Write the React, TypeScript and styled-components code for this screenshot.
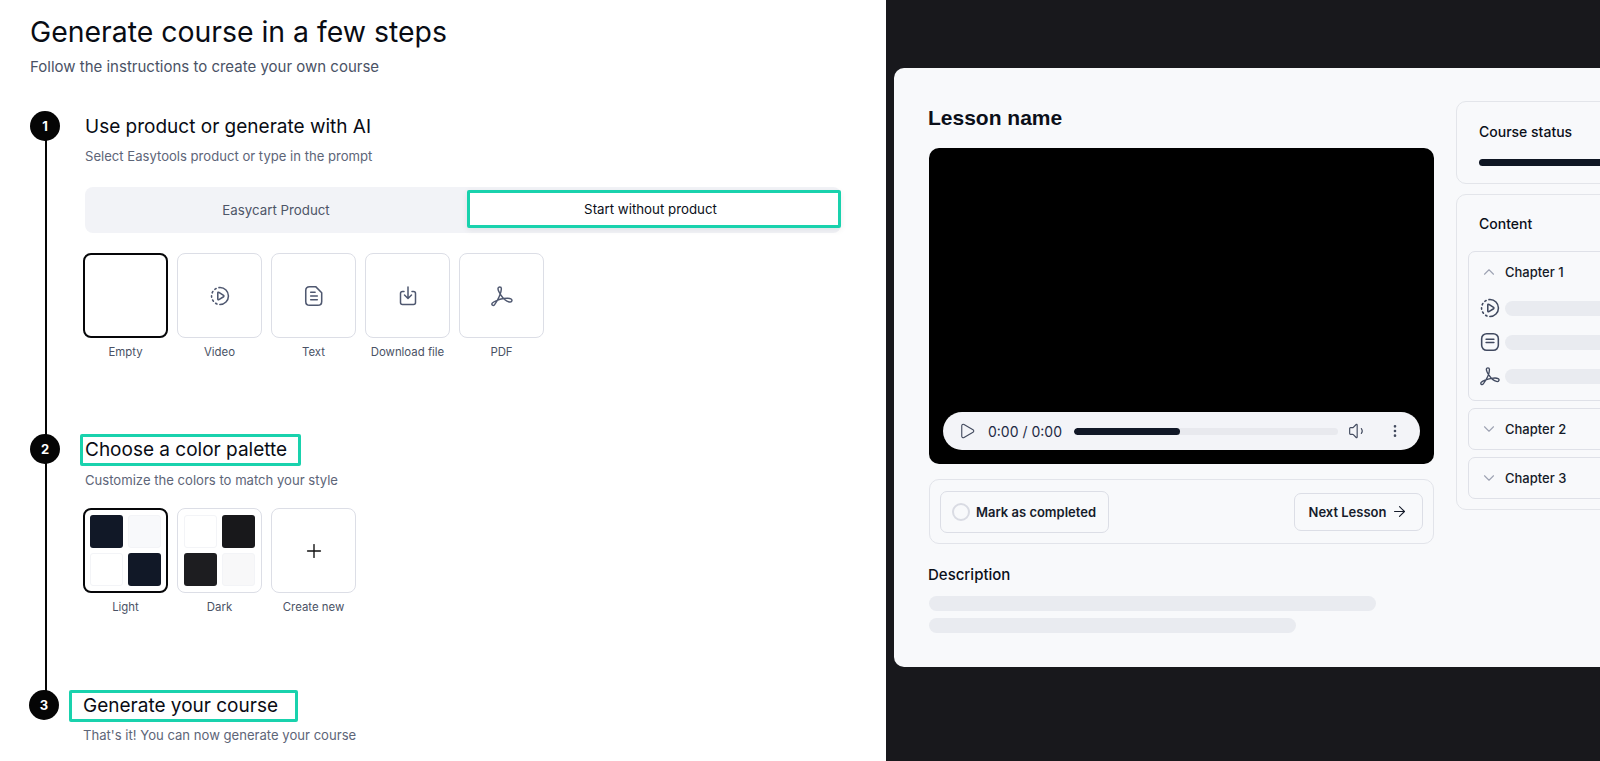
import React from "react";
import styled, { createGlobalStyle } from "styled-components";
import { Plus, Play, Volume1, EllipsisVertical, ArrowRight, ChevronUp, ChevronDown } from "lucide-react";

const Global = createGlobalStyle`
  html, body { margin: 0; padding: 0; width: 100%; height: 761px; overflow: hidden; background: #fff; }
  * { box-sizing: border-box; }
  body { font-family: Inter, "Noto Sans", sans-serif; color: #0b0f19; }
`;

const Page = styled.div`
  display: grid;
  grid-template-columns: 886px 714px;
  height: 761px;
  overflow: hidden;
`;

const Left = styled.section`
  padding: 14px 0 0 30px;
  background: #fff;
  min-width: 0;
`;

const Title = styled.h1`
  margin: 0;
  font-size: 28.4px;
  line-height: 36px;
  font-weight: 400;
  color: #090c14;
`;

const Subtitle = styled.p`
  margin: 7px 0 0;
  font-size: 15px;
  line-height: 20px;
  color: #4a5265;
`;

const Step = styled.div<{ $height: number; $top?: number; $line?: boolean; $shift?: number }>`
  position: relative;
  display: grid;
  grid-template-columns: 30px 1fr;
  column-gap: 24px;
  height: ${(p) => p.$height}px;
  margin-top: ${(p) => p.$top ?? 0}px;
  margin-left: ${(p) => p.$shift ?? 0}px;
  ${(p) =>
    p.$line &&
    `&::before { content: ""; position: absolute; left: 15px; top: 12px; bottom: -12px; width: 2px; background: #050505; }`}
`;

const Badge = styled.div`
  position: relative;
  z-index: 1;
  width: 30px;
  height: 30px;
  border-radius: 50%;
  background: #050505;
  color: #fff;
  font-size: 13px;
  font-weight: 700;
  display: flex;
  align-items: center;
  justify-content: center;
`;

const StepBody = styled.div<{ $left?: number; $top?: number }>`
  min-width: 0;
  padding-left: ${(p) => p.$left ?? 0}px;
  padding-top: ${(p) => p.$top ?? 0}px;
`;

const StepTitle = styled.h2`
  margin: 0;
  font-size: 19px;
  line-height: 30px;
  font-weight: 400;
  color: #090c14;
`;

const MarkedTitle = styled(StepTitle)<{ $pl: number; $pr: number; $mb: number }>`
  display: block;
  width: fit-content;
  border: 3px solid #19d2ad;
  border-radius: 2px;
  line-height: 26px;
  padding: 0 ${(p) => p.$pr}px 0 ${(p) => p.$pl}px;
  margin-left: ${(p) => -p.$pl - 3}px;
  margin-bottom: ${(p) => p.$mb}px;
`;

const StepHint = styled.p`
  margin: 5px 0 0;
  font-size: 13.1px;
  line-height: 18px;
  color: #5d6578;
`;

const Tabs = styled.div`
  margin-top: 22px;
  width: 756px;
  height: 46px;
  border-radius: 8px;
  background: #f2f3f7;
  display: grid;
  grid-template-columns: 382px 374px;
  align-items: start;
`;

const Tab = styled.div`
  text-align: center;
  font-size: 13.3px;
  line-height: 46px;
  color: #4e5567;
`;

const ActiveTab = styled.div`
  margin-top: 3px;
  height: 38px;
  background: #fff;
  border: 3px solid #19d2ad;
  border-radius: 2px;
  display: flex;
  align-items: center;
  justify-content: center;
  padding-right: 7px;
  font-size: 13.3px;
  color: #0b0f19;
  box-shadow: 0 2px 6px rgba(16, 24, 40, 0.08);
`;

const TileRow = styled.div<{ $top: number }>`
  display: flex;
  gap: 9px;
  margin-top: ${(p) => p.$top}px;
  margin-left: -2px;
`;

const TileItem = styled.div`
  width: 85px;
  display: flex;
  flex-direction: column;
  align-items: center;
  gap: 7px;
`;

const Tile = styled.div<{ $selected?: boolean }>`
  width: 85px;
  height: 85px;
  border-radius: 8px;
  border: ${(p) => (p.$selected ? "2px solid #060709" : "1px solid #dcdee6")};
  background: #fff;
  color: #4f5870;
  display: flex;
  align-items: center;
  justify-content: center;
`;

const TileLabel = styled.div`
  font-size: 11.4px;
  line-height: 14px;
  color: #4a5265;
  white-space: nowrap;
`;

const Swatches = styled.div`
  display: grid;
  grid-template-columns: 33px 33px;
  grid-auto-rows: 33px;
  gap: 5px;
`;

const Swatch = styled.div<{ $c: string; $light?: boolean }>`
  border-radius: 3px;
  background: ${(p) => p.$c};
  ${(p) => p.$light && "border: 1px solid #f3f4f7;"}
`;

const Right = styled.section`
  background: #18181c;
  padding: 68px 0 0 8px;
  overflow: hidden;
  min-width: 0;
`;

const Card = styled.div`
  width: 860px;
  height: 599px;
  background: #f8f9fb;
  border-radius: 10px;
  padding: 37px 0 0 35px;
  display: grid;
  grid-template-columns: 505px 1fr;
  column-gap: 22px;
`;

const Main = styled.div`
  min-width: 0;
`;

const LessonName = styled.h3`
  margin: 0 0 0 -1px;
  font-family: "Liberation Sans", Arial, sans-serif;
  font-size: 21px;
  line-height: 26px;
  font-weight: 700;
  color: #0b0f19;
`;

const Video = styled.div`
  margin-top: 17px;
  height: 316px;
  border-radius: 10px;
  background: #000;
  display: flex;
  align-items: flex-end;
  padding: 0 14px 14px 14px;
`;

const Controls = styled.div`
  width: 100%;
  height: 38px;
  border-radius: 19px;
  background: #f3f4f8;
  display: flex;
  align-items: center;
  padding: 0 17px 0 15px;
  color: #434b5f;
`;

const TimeText = styled.span`
  margin-left: 12px;
  font-size: 14px;
  color: #1e2a44;
  white-space: nowrap;
`;

const Track = styled.div`
  margin: 0 10px 0 12px;
  flex: 1;
  height: 7px;
  border-radius: 4px;
  background: #e8e9ee;
  overflow: hidden;
`;

const TrackFill = styled.div`
  height: 100%;
  border-radius: 4px;
  background: #111827;
`;

const ControlIcon = styled.span<{ $gap?: number }>`
  display: inline-flex;
  margin-left: ${(p) => p.$gap ?? 0}px;
`;

const ActionBox = styled.div`
  margin-top: 15px;
  height: 65px;
  border: 1px solid #e2e4ea;
  border-radius: 10px;
  display: flex;
  align-items: center;
  justify-content: space-between;
  padding: 0 10px 0 10px;
`;

const MarkButton = styled.div`
  width: 169px;
  height: 42px;
  border: 1px solid #dcdee6;
  border-radius: 7px;
  display: flex;
  align-items: center;
  gap: 6px;
  padding-left: 11px;
  font-size: 13px;
  font-weight: 600;
  color: #161c2b;
`;

const Radio = styled.span`
  width: 18px;
  height: 18px;
  border-radius: 50%;
  border: 2px solid #d9dbe3;
`;

const NextButton = styled.div`
  width: 129px;
  height: 38px;
  border: 1px solid #dcdee6;
  border-radius: 7px;
  display: flex;
  align-items: center;
  justify-content: center;
  gap: 5px;
  font-size: 13px;
  font-weight: 600;
  color: #161c2b;
`;

const DescTitle = styled.div`
  margin: 21px 0 0 -1px;
  font-size: 15px;
  line-height: 20px;
  font-weight: 500;
  color: #0b0f19;
`;

const Skeleton = styled.div<{ $w: string; $top?: number }>`
  width: ${(p) => p.$w};
  height: 15px;
  border-radius: 8px;
  background: #e9ebf0;
  margin-top: ${(p) => p.$top ?? 7}px;
`;

const Side = styled.div`
  margin-top: -4px;
  display: flex;
  flex-direction: column;
  gap: 10px;
  min-width: 0;
`;

const Panel = styled.div<{ $h: number; $pad: number }>`
  height: ${(p) => p.$h}px;
  border: 1px solid #e3e5ea;
  border-radius: 10px;
  padding: ${(p) => p.$pad}px 10px 0 22px;
`;

const PanelTitle = styled.div`
  font-size: 14px;
  line-height: 20px;
  font-weight: 500;
  color: #0b0f19;
`;

const StatusBar = styled.div`
  margin-top: 17px;
  height: 7px;
  border-radius: 4px;
  background: #0f1623;
`;

const ChapterList = styled.div`
  margin: 17px 0 0 -11px;
  display: flex;
  flex-direction: column;
  gap: 7px;
`;

const Chapter = styled.div<{ $open?: boolean }>`
  height: ${(p) => (p.$open ? 150 : 42)}px;
  border: 1px solid #dfe1e8;
  border-radius: 7px;
  padding: ${(p) => (p.$open ? 1 : 0)}px 0 0 11px;
`;

const ChapterHead = styled.div<{ $open?: boolean }>`
  height: ${(p) => (p.$open ? 38 : 40)}px;
  display: flex;
  align-items: center;
  gap: 7px;
  font-size: 13px;
  font-weight: 500;
  color: #141a28;
  svg { color: #9ea3b3; }
`;

const LessonRow = styled.div`
  height: 34px;
  display: flex;
  align-items: center;
  gap: 5px;
  color: #414a60;
`;

const RowBar = styled.div`
  flex: 1;
  height: 15px;
  border-radius: 8px 0 0 8px;
  background: #e9ebf0;
`;

const VideoIcon = ({ size = 20 }: { size?: number }) => (
  <svg width={size} height={size} viewBox="0 0 18 18" fill="none" stroke="currentColor" strokeWidth="1.4" strokeLinecap="round" strokeLinejoin="round">
    <circle cx="9" cy="9" r="7.6" strokeDasharray="12 2.6 1.4 2.6 1.4 2.6 1.4 2.6 1.4 2.6 1.4 2.6 13.15" />
    <path d="M7 6.200v5.600c0 .5.5.8 1 .5l4.200-2.600c.4-.3.4-.9 0-1.200L8 5.700c-.5-.3-1 0-1 .5Z" />
  </svg>
);

const DocIcon = () => (
  <svg width="20" height="22" viewBox="0 0 18 20" fill="none" stroke="currentColor" strokeWidth="1.4" strokeLinecap="round" strokeLinejoin="round">
    <path d="M5 1.500h5.500L16 7v8c0 2-1.500 3.500-3.500 3.500H5C3 18.500 1.500 17 1.500 15V5C1.500 3 3 1.500 5 1.500Z" />
    <path d="M6 6.500h4M6 10h6M6 13.500h6" />
  </svg>
);

const NoteIcon = () => (
  <svg width="20" height="20" viewBox="0 0 18 18" fill="none" stroke="currentColor" strokeWidth="1.400" strokeLinecap="round">
    <rect x="1.500" y="1.500" width="15" height="15" rx="4.500" />
    <path d="M5.500 6.500h7M5.500 9.500h7" />
  </svg>
);

const DownloadIcon = () => (
  <svg width="18" height="22" viewBox="0 0 18 21" fill="none" stroke="currentColor" strokeWidth="1.500" strokeLinecap="round" strokeLinejoin="round">
    <path d="M9 1.500v11M5.500 9.500 9 13l3.500-3.500" />
    <path d="M5 6H3.500a2 2 0 0 0-2 2v9a2 2 0 0 0 2 2h11a2 2 0 0 0 2-2V8a2 2 0 0 0-2-2H13" />
  </svg>
);

const PdfIcon = ({ size = 22 }: { size?: number }) => (
  <svg width={size} height={size} viewBox="1 0.500 19.500 19" fill="none" stroke="currentColor" strokeWidth="1.300" strokeLinecap="round" strokeLinejoin="round">
    <path d="M7.200 3.600c0-2 3-2 3 0 0 3.500-3 10-6 14-1.200 1.600-3.200.2-2.100-1.300 1-1.300 5.800-3.400 9.900-4 2-.3 4.800-.7 6.600.2 2 1 .6 3.400-1.500 2.800-2.800-.8-5.500-3.300-7-5.600-1.500-2.300-2.900-4.300-2.900-6.100Z" />
  </svg>
);

export default function App() {
  return (
    <>
      <Global />
      <Page>
        <Left>
          <Title>Generate course in a few steps</Title>
          <Subtitle>Follow the instructions to create your own course</Subtitle>

          <Step $height={323} $top={34} $line>
            <Badge>1</Badge>
            <StepBody $left={1} $top={1}>
              <StepTitle>Use product or generate with AI</StepTitle>
              <StepHint>Select Easytools product or type in the prompt</StepHint>
              <Tabs>
                <Tab>Easycart Product</Tab>
                <ActiveTab>Start without product</ActiveTab>
              </Tabs>
              <TileRow $top={20}>
                <TileItem>
                  <Tile $selected />
                  <TileLabel>Empty</TileLabel>
                </TileItem>
                <TileItem>
                  <Tile><VideoIcon /></Tile>
                  <TileLabel>Video</TileLabel>
                </TileItem>
                <TileItem>
                  <Tile><DocIcon /></Tile>
                  <TileLabel>Text</TileLabel>
                </TileItem>
                <TileItem>
                  <Tile><DownloadIcon /></Tile>
                  <TileLabel>Download file</TileLabel>
                </TileItem>
                <TileItem>
                  <Tile><PdfIcon /></Tile>
                  <TileLabel>PDF</TileLabel>
                </TileItem>
              </TileRow>
            </StepBody>
          </Step>

          <Step $height={256} $line>
            <Badge>2</Badge>
            <StepBody $left={1}>
              <MarkedTitle $pl={2} $pr={11} $mb={0}>Choose a color palette</MarkedTitle>
              <StepHint>Customize the colors to match your style</StepHint>
              <TileRow $top={19}>
                <TileItem>
                  <Tile $selected>
                    <Swatches>
                      <Swatch $c="#111827" />
                      <Swatch $c="#f8f9fb" $light />
                      <Swatch $c="#ffffff" $light />
                      <Swatch $c="#111827" />
                    </Swatches>
                  </Tile>
                  <TileLabel>Light</TileLabel>
                </TileItem>
                <TileItem>
                  <Tile>
                    <Swatches>
                      <Swatch $c="#ffffff" $light />
                      <Swatch $c="#18181b" />
                      <Swatch $c="#1d1d20" />
                      <Swatch $c="#f8f8f9" $light />
                    </Swatches>
                  </Tile>
                  <TileLabel>Dark</TileLabel>
                </TileItem>
                <TileItem>
                  <Tile>
                    <Plus size={22} color="#111" strokeWidth={1.5} />
                  </Tile>
                  <TileLabel>Create new</TileLabel>
                </TileItem>
              </TileRow>
            </StepBody>
          </Step>

          <Step $height={70} $shift={-1}>
            <Badge>3</Badge>
            <StepBody>
              <MarkedTitle $pl={11} $pr={17} $mb={-1}>Generate your course</MarkedTitle>
              <StepHint>That's it! You can now generate your course</StepHint>
            </StepBody>
          </Step>
        </Left>

        <Right>
          <Card>
            <Main>
              <LessonName>Lesson name</LessonName>
              <Video>
                <Controls>
                  <Play size={18} strokeWidth={1.5} />
                  <TimeText>0:00 / 0:00</TimeText>
                  <Track>
                    <TrackFill style={{ width: "40%" }} />
                  </Track>
                  <ControlIcon><Volume1 size={20} strokeWidth={1.4} /></ControlIcon>
                  <ControlIcon $gap={19}><EllipsisVertical size={16} strokeWidth={2} /></ControlIcon>
                </Controls>
              </Video>
              <ActionBox>
                <MarkButton>
                  <Radio />
                  Mark as completed
                </MarkButton>
                <NextButton>
                  Next Lesson
                  <ArrowRight size={17} strokeWidth={1.5} />
                </NextButton>
              </ActionBox>
              <DescTitle>Description</DescTitle>
              <Skeleton $w="447px" $top={11} />
              <Skeleton $w="367px" />
            </Main>
            <Side>
              <Panel $h={83} $pad={20}>
                <PanelTitle>Course status</PanelTitle>
                <StatusBar />
              </Panel>
              <Panel $h={316} $pad={19}>
                <PanelTitle>Content</PanelTitle>
                <ChapterList>
                  <Chapter $open>
                    <ChapterHead $open>
                      <ChevronUp size={18} strokeWidth={1.5} />
                      Chapter 1
                    </ChapterHead>
                    <LessonRow><VideoIcon /><RowBar /></LessonRow>
                    <LessonRow><NoteIcon /><RowBar /></LessonRow>
                    <LessonRow><PdfIcon size={20} /><RowBar /></LessonRow>
                  </Chapter>
                  <Chapter>
                    <ChapterHead>
                      <ChevronDown size={18} strokeWidth={1.5} />
                      Chapter 2
                    </ChapterHead>
                  </Chapter>
                  <Chapter>
                    <ChapterHead>
                      <ChevronDown size={18} strokeWidth={1.5} />
                      Chapter 3
                    </ChapterHead>
                  </Chapter>
                </ChapterList>
              </Panel>
            </Side>
          </Card>
        </Right>
      </Page>
    </>
  );
}
